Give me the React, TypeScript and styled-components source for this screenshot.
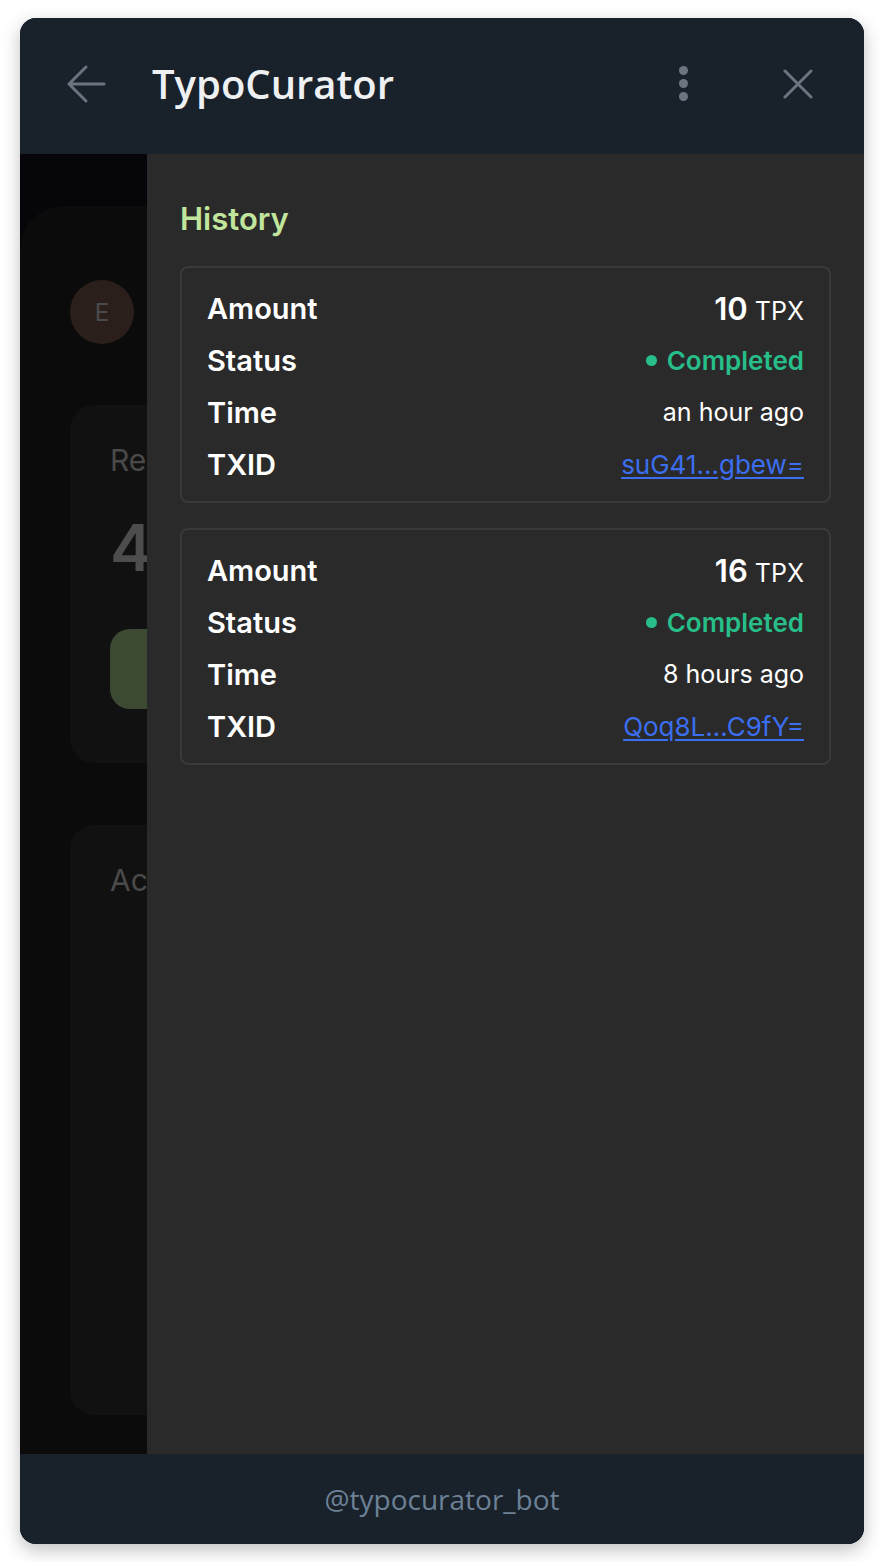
import styled, { createGlobalStyle } from 'styled-components';

type Tx = {
  amount: number;
  time: string;
  txid: string;
};

const history: Tx[] = [
  { amount: 10, time: 'an hour ago', txid: 'suG41...gbew=' },
  { amount: 16, time: '8 hours ago', txid: 'Qoq8L...C9fY=' },
];

const App: React.FC = () => {
  return (
    <>
      <GlobalStyle />
      <Window>
        <Header>
          <IconButton aria-label="Back">
            <svg width="40" height="40" viewBox="0 0 40 40" fill="none">
              <path d="M20 3 L3 20 L20 37 M3 20 H38" stroke="#6b7580" strokeWidth="3" strokeLinecap="round" strokeLinejoin="round" />
            </svg>
          </IconButton>
          <Title>TypoCurator</Title>
          <MenuButton aria-label="Menu">
            <Dot />
            <Dot />
            <Dot />
          </MenuButton>
          <CloseButton aria-label="Close">
            <svg width="30" height="30" viewBox="0 0 30 30" fill="none">
              <path d="M2 2 L28 28 M28 2 L2 28" stroke="#6b7580" strokeWidth="3" strokeLinecap="round" />
            </svg>
          </CloseButton>
        </Header>

        <Content>
          <Underlay>
            <BackPanel>
              <Avatar>E</Avatar>
              <BackCard $height={358}>
                <BackLabel>Rewards</BackLabel>
                <BigNumber>42</BigNumber>
                <ClaimButton />
              </BackCard>
              <BackCard $height={590}>
                <BackLabel>Activity</BackLabel>
              </BackCard>
            </BackPanel>
          </Underlay>

          <Drawer>
            <DrawerTitle>History</DrawerTitle>
            <List>
              {history.map((tx) => (
                <TxCard key={tx.txid}>
                  <Row>
                    <Label>Amount</Label>
                    <Value>
                      <Amount>{tx.amount}</Amount> TPX
                    </Value>
                  </Row>
                  <Row>
                    <Label>Status</Label>
                    <Status>
                      <StatusDot />
                      Completed
                    </Status>
                  </Row>
                  <Row>
                    <Label>Time</Label>
                    <Value>{tx.time}</Value>
                  </Row>
                  <Row>
                    <Label>TXID</Label>
                    <TxLink href="#">{tx.txid}</TxLink>
                  </Row>
                </TxCard>
              ))}
            </List>
          </Drawer>
        </Content>

        <Footer>@typocurator_bot</Footer>
      </Window>
    </>
  );
};

export default App;

// Styled components

const GlobalStyle = createGlobalStyle`
  html, body {
    margin: 0;
    padding: 0;
    background: #ffffff;
  }
  * {
    box-sizing: border-box;
  }
`;

const Window = styled.div`
  margin: 18px 20px;
  width: 844px;
  height: 1526px;
  border-radius: 16px;
  overflow: hidden;
  display: flex;
  flex-direction: column;
  box-shadow: 0 6px 18px rgba(0, 0, 0, 0.25);
  background: #19212b;
`;

const Header = styled.header`
  height: 136px;
  flex: 0 0 136px;
  display: flex;
  align-items: center;
  padding: 0 0 4px 46px;
  background: #19212b;
`;

const IconButton = styled.div`
  width: 40px;
  height: 40px;
  display: flex;
  align-items: center;
  justify-content: center;
`;

const Title = styled.h1`
  margin: 0 0 0 46px;
  flex: 1;
  font-family: 'Open Sans', 'Noto Sans', sans-serif;
  font-weight: 600;
  font-size: 40px;
  line-height: 48px;
  color: #eef0f2;
`;

const MenuButton = styled.div`
  width: 10px;
  display: flex;
  flex-direction: column;
  align-items: center;
  gap: 4px;
  margin: -2px 95px 0 0;
`;

const Dot = styled.span`
  width: 9px;
  height: 9px;
  border-radius: 50%;
  background: #6b7580;
`;

const CloseButton = styled.div`
  width: 30px;
  height: 30px;
  margin-right: 51px;
  display: flex;
`;

const Content = styled.main`
  flex: 1;
  display: flex;
  min-height: 0;
`;

const Underlay = styled.div`
  flex: 0 0 127px;
  overflow: hidden;
  background: #05050a;
  padding-top: 52px;
`;

const BackPanel = styled.div`
  width: 800px;
  height: 100%;
  background: #0b0b0b;
  border-top-left-radius: 44px;
  padding: 74px 0 0 50px;
  display: flex;
  flex-direction: column;
  gap: 62px;
  font-family: 'Inter', sans-serif;
`;

const Avatar = styled.div`
  width: 64px;
  height: 64px;
  border-radius: 50%;
  background: #2b1f1b;
  color: #4a4a4a;
  font-size: 24px;
  display: flex;
  align-items: center;
  justify-content: center;
  margin-bottom: -1px;
`;

const BackCard = styled.div<{ $height: number }>`
  height: ${({ $height }) => $height}px;
  background: #111111;
  border-radius: 24px;
  padding: 37px 0 0 40px;
  display: flex;
  flex-direction: column;
`;

const BackLabel = styled.div`
  font-size: 30px;
  color: #4a4a4a;
  line-height: 36px;
`;

const BigNumber = styled.div`
  font-size: 64px;
  font-weight: 600;
  color: #4d4d4d;
  line-height: 70px;
  margin-top: 35px;
`;

const ClaimButton = styled.div`
  width: 400px;
  height: 80px;
  margin-top: 46px;
  border-radius: 20px;
  background: #3c4a33;
`;

const Drawer = styled.section`
  flex: 1;
  background: #2a2a2a;
  padding: 44px 33px 0 33px;
  font-family: 'Inter', sans-serif;
`;

const DrawerTitle = styled.h2`
  margin: 0;
  font-size: 31px;
  line-height: 42px;
  font-weight: 600;
  color: #c2e59d;
`;

const List = styled.div`
  margin-top: 26px;
  display: flex;
  flex-direction: column;
  gap: 25px;
`;

const TxCard = styled.div`
  border: 2px solid #3a3a3a;
  border-radius: 8px;
  padding: 14px 25px 11px 25px;
`;

const Row = styled.div`
  height: 52px;
  display: flex;
  align-items: center;
  justify-content: space-between;
`;

const Label = styled.span`
  font-size: 29px;
  font-weight: 600;
  color: #ffffff;
`;

const Value = styled.span`
  font-size: 25px;
  color: #ffffff;
`;

const Amount = styled.span`
  font-size: 31px;
  font-weight: 600;
`;

const Status = styled.span`
  display: flex;
  align-items: center;
  gap: 10px;
  font-size: 26px;
  font-weight: 600;
  color: #27be89;
`;

const StatusDot = styled.span`
  width: 11px;
  height: 11px;
  border-radius: 50%;
  background: #27be89;
`;

const TxLink = styled.a`
  font-size: 26px;
  color: #3b6ef0;
  text-decoration: underline;
  text-underline-offset: 3px;
`;

const Footer = styled.footer`
  flex: 0 0 90px;
  display: flex;
  align-items: center;
  justify-content: center;
  background: #19212b;
  font-family: 'Open Sans', 'Noto Sans', sans-serif;
  font-size: 28px;
  color: #6d8196;
`;
